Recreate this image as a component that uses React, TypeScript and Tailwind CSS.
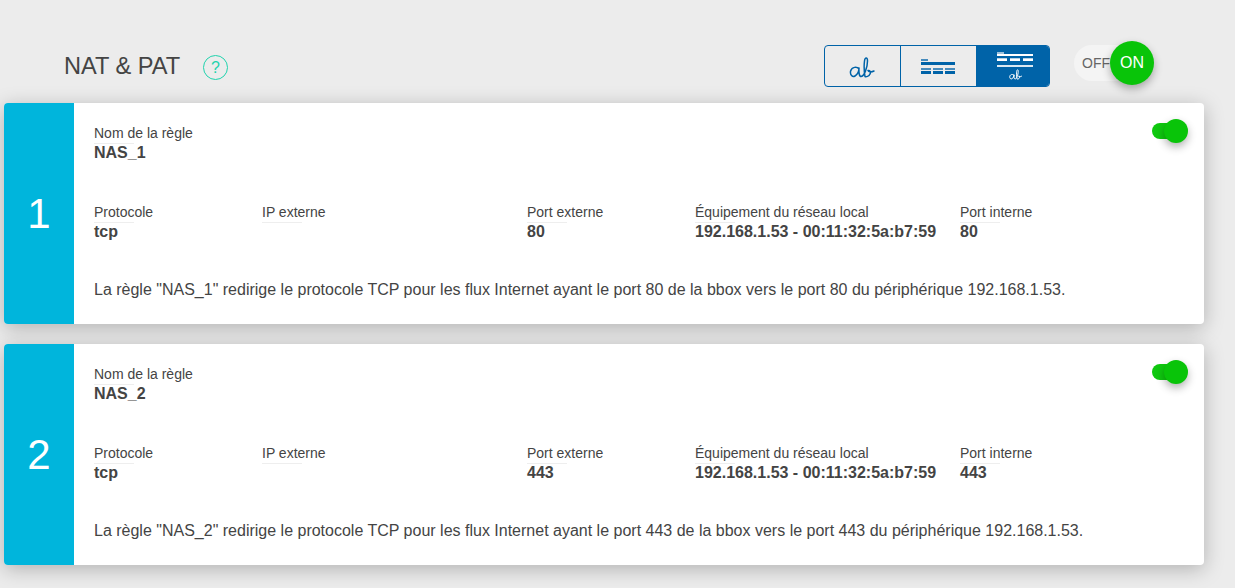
import React from "react";

const Label = ({ children }: { children: React.ReactNode }) => (
  <div className="relative h-[20px] text-[14px] leading-[20px] text-[#444]">
    {children}
    <div className="absolute left-0 top-[20px] h-px w-[40px] bg-[#eeeeee]" />
  </div>
);

const Value = ({ children }: { children?: React.ReactNode }) => (
  <div className="h-[20px] text-[16px] font-bold leading-[20px] text-[#444]">{children}</div>
);

const Field = ({ label, value }: { label: string; value?: string }) => (
  <div>
    <Label>{label}</Label>
    <Value>{value}</Value>
  </div>
);

const Toggle = () => (
  <div className="absolute right-[16px] top-[16px] flex h-[24px] w-[36px] items-center">
    <div className="h-[16px] w-[24px] rounded-full bg-[#0fc80f]" />
    <div className="absolute right-0 top-0 h-[24px] w-[24px] rounded-full bg-[#09c409] shadow-[0_4px_8px_rgba(0,0,0,0.3)]" />
  </div>
);

const Card = ({ n, name, port }: { n: number; name: string; port: string }) => (
  <div className="flex h-[221px] w-[1200px] rounded-[4px] bg-white shadow-[0_4px_20px_rgba(0,0,0,0.25)]">
    <div className="flex w-[70px] shrink-0 items-center justify-center rounded-l-[4px] bg-[#00b5dc] text-[42px] text-white">
      {n}
    </div>
    <div className="relative flex-1 pl-[20px] pt-[20px]">
      <Toggle />
      <Field label="Nom de la règle" value={name} />
      <div className="mt-[39px] grid grid-cols-[168px_265px_168px_265px_1fr]">
        <Field label="Protocole" value="tcp" />
        <Field label="IP externe" />
        <Field label="Port externe" value={port} />
        <Field label="Équipement du réseau local" value="192.168.1.53 - 00:11:32:5a:b7:59" />
        <Field label="Port interne" value={port} />
      </div>
      <p className="mt-[38px] text-[16px] leading-[20px] text-[#444]">
        La règle "{name}" redirige le protocole TCP pour les flux Internet ayant le port {port} de la bbox vers le port {port} du périphérique 192.168.1.53.
      </p>
    </div>
  </div>
);

const AbIcon = ({ color, className, sw }: { color: string; className: string; sw: string }) => (
  <svg viewBox="0 0 26 21" className={className} fill="none" stroke={color} strokeWidth={sw} strokeLinecap="round" strokeLinejoin="round">
    <path d="M10 12C8 9.5 3 9.5 1.6 14C.8 18 3.5 20.5 6 19C8.5 17.5 10 14 10 11C9.8 15 10 19.5 12 19.5C15 19.5 18.5 11 18.5 4C18.5 0 16 0 15.5 4C15 8 15 14 16 19.5C17 20 20 19.5 21 17C22 15 21 13 19 13.5C19.5 15 22 15.5 25 14" />
  </svg>
);

const Lines = () => (
  <svg width="35" height="15" viewBox="0 0 35 15" fill="#0063a8">
    <rect x="0" y="0" width="7" height="2" opacity="0.7" />
    <rect x="0" y="3" width="34" height="3" />
    <rect x="0" y="9" width="10" height="2" opacity="0.7" />
    <rect x="12" y="9" width="10" height="2" opacity="0.7" />
    <rect x="24" y="9" width="10" height="2" opacity="0.7" />
    <rect x="0" y="12" width="10" height="3" />
    <rect x="12" y="12" width="10" height="3" />
    <rect x="24" y="12" width="10" height="3" />
  </svg>
);

const LinesAb = () => (
  <svg width="36" height="15" viewBox="0 0 36 15" fill="#ffffff">
    <rect x="0" y="0" width="7" height="2" opacity="0.6" />
    <rect x="0" y="2" width="36" height="2" />
    <rect x="0" y="6" width="10" height="1" opacity="0.7" />
    <rect x="13" y="6" width="10" height="1" opacity="0.7" />
    <rect x="26" y="6" width="10" height="1" opacity="0.7" />
    <rect x="0" y="7" width="10" height="2" />
    <rect x="13" y="7" width="10" height="2" />
    <rect x="26" y="7" width="10" height="2" />
    <rect x="0" y="13" width="36" height="2" opacity="0.85" />
  </svg>
);

export default function App() {
  return (
    <div className="min-h-[588px] w-[1235px] overflow-hidden bg-[#ececec] font-['Liberation_Sans',Arial,sans-serif]">
      <div className="flex h-[103px] items-start pl-[64px]">
        <h1 className="mt-[52px] w-[116px] whitespace-nowrap text-[23.6px] font-normal leading-[28px] text-[#444]">NAT &amp; PAT</h1>
        <div className="ml-[23px] mt-[55px] flex h-[25px] w-[25px] items-center justify-center rounded-full border border-[#1fd3ad] text-[16px] leading-none text-[#1fd3ad]">
          ?
        </div>
        <div className="ml-[596px] mt-[45px] flex h-[42px] w-[226px] overflow-hidden rounded-[4px] border-[1.5px] border-[#0063a8]">
          <div className="flex w-[76px] items-center justify-center border-r-[1.5px] border-[#0063a8] pr-[2px]">
            <AbIcon color="#0063a8" sw="1.5" className="mt-[2px] h-[21px] w-[26px]" />
          </div>
          <div className="flex w-[75px] items-center justify-center">
            <Lines />
          </div>
          <div className="flex flex-1 flex-col items-center justify-center bg-[#0063a8] pl-[5px]">
            <LinesAb />
            <AbIcon color="#ffffff" sw="2" className="mt-[2px] h-[11px] w-[13px]" />
          </div>
        </div>
        <div className="relative ml-[24px] mt-[45px] h-[36px] w-[80px]">
          <div className="flex h-[36px] w-[60px] items-center rounded-full bg-[#f4f4f4] pl-[8px] text-[14px] text-[#666]">OFF</div>
          <div className="absolute left-[36px] top-[-4px] flex h-[44px] w-[44px] items-center justify-center rounded-full bg-[#09c409] text-[16px] text-white shadow-[0_4px_8px_rgba(0,0,0,0.3)]">
            ON
          </div>
        </div>
      </div>
      <div className="flex flex-col gap-[20px] pl-[4px]">
        <Card n={1} name="NAS_1" port="80" />
        <Card n={2} name="NAS_2" port="443" />
      </div>
    </div>
  );
}
